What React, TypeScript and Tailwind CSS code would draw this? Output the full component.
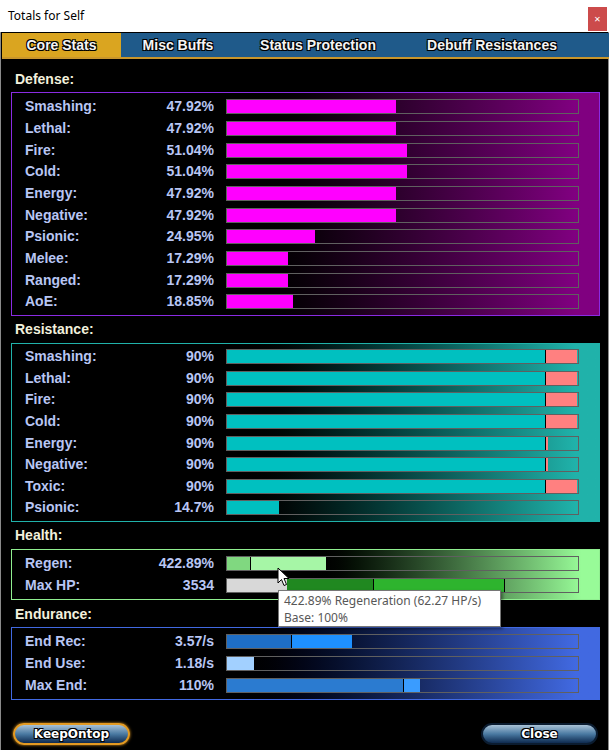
import React from "react";

type Seg = { w: number; color: string; divider?: boolean };
type Row = { label: string; value: string; segs: Seg[] };

const labelFont = { fontFamily: '"Liberation Sans", Arial, sans-serif' };

const outline =
  "[text-shadow:-1px_-1px_0_#000,1px_-1px_0_#000,-1px_1px_0_#000,1px_1px_0_#000]";

const mag = (pct: number): Seg[] => [{ w: Math.round(pct * 3.52), color: "#ff00ff" }];

const DEFENSE: Row[] = [
  { label: "Smashing:", value: "47.92%", segs: mag(47.92) },
  { label: "Lethal:", value: "47.92%", segs: mag(47.92) },
  { label: "Fire:", value: "51.04%", segs: mag(51.04) },
  { label: "Cold:", value: "51.04%", segs: mag(51.04) },
  { label: "Energy:", value: "47.92%", segs: mag(47.92) },
  { label: "Negative:", value: "47.92%", segs: mag(47.92) },
  { label: "Psionic:", value: "24.95%", segs: mag(24.95) },
  { label: "Melee:", value: "17.29%", segs: mag(17.29) },
  { label: "Ranged:", value: "17.29%", segs: mag(17.29) },
  { label: "AoE:", value: "18.85%", segs: mag(18.85) },
];

const capped: Seg[] = [
  { w: 318, color: "#00c0c0" },
  { w: 32, color: "#ff8080", divider: true },
];
const sliver: Seg[] = [
  { w: 318, color: "#00c0c0" },
  { w: 3, color: "#ff8080", divider: true },
];

const RESISTANCE: Row[] = [
  { label: "Smashing:", value: "90%", segs: capped },
  { label: "Lethal:", value: "90%", segs: capped },
  { label: "Fire:", value: "90%", segs: capped },
  { label: "Cold:", value: "90%", segs: capped },
  { label: "Energy:", value: "90%", segs: sliver },
  { label: "Negative:", value: "90%", segs: sliver },
  { label: "Toxic:", value: "90%", segs: capped },
  { label: "Psionic:", value: "14.7%", segs: [{ w: 52, color: "#00c0c0" }] },
];

const HEALTH: Row[] = [
  {
    label: "Regen:",
    value: "422.89%",
    segs: [
      { w: 23, color: "#80d880" },
      { w: 76, color: "#a6f6a6", divider: true },
    ],
  },
  {
    label: "Max HP:",
    value: "3534",
    segs: [
      { w: 60, color: "#d8d8d8" },
      { w: 86, color: "#208820" },
      { w: 131, color: "#2eb42e", divider: true },
      { w: 1, color: "#000" },
    ],
  },
];

const ENDURANCE: Row[] = [
  {
    label: "End Rec:",
    value: "3.57/s",
    segs: [
      { w: 64, color: "#1e6ec6" },
      { w: 61, color: "#1e90ff", divider: true },
    ],
  },
  { label: "End Use:", value: "1.18/s", segs: [{ w: 27, color: "#a2d0ff" }] },
  {
    label: "Max End:",
    value: "110%",
    segs: [
      { w: 176, color: "#2b7bd0" },
      { w: 17, color: "#3a9cff", divider: true },
    ],
  },
];

function StatRow({ row }: { row: Row }) {
  return (
    <div className="flex items-center h-[21.67px]">
      <div
        className="w-[189px] flex justify-between text-[14px] font-bold text-[#b8c6f4] [text-shadow:1px_1px_1px_#000]"
        style={labelFont}
      >
        <span>{row.label}</span>
        <span>{row.value}</span>
      </div>
      <div className="ml-[12px] w-[353px] h-[15px] border border-[#606060] flex overflow-hidden">
        {row.segs.map((s, i) => (
          <div
            key={i}
            className={s.divider ? "h-full border-l border-black shrink-0" : "h-full shrink-0"}
            style={{ width: s.w, backgroundColor: s.color }}
          />
        ))}
      </div>
    </div>
  );
}

function Section({
  title,
  rows,
  border,
  grad,
  pad,
}: {
  title: string;
  rows: Row[];
  border: string;
  grad: string;
  pad: string;
}) {
  return (
    <div>
      <div
        className="h-[27px] flex items-center pl-[14px] pt-[1px] text-[14px] font-bold text-[#f2f0dc] [text-shadow:1px_1px_1px_#000]"
        style={labelFont}
      >
        {title}
      </div>
      <div className={`ml-[10px] w-[589px] border pl-[13px] ${pad} ${border} ${grad}`}>
        {rows.map((r) => (
          <StatRow key={r.label} row={r} />
        ))}
      </div>
    </div>
  );
}

function GameButton({ label, glow }: { label: string; glow?: boolean }) {
  return (
    <div
      className={`w-[117px] h-[22px] rounded-full flex items-center justify-center bg-gradient-to-b from-[#a9c2d6] via-[#4a7aa2] to-[#0f2b50] border-2 ${
        glow ? "border-[#e39a22] shadow-[0_0_3px_#e39a22]" : "border-[#0b1c30]"
      }`}
    >
      <span
        className={`text-[12px] font-bold text-white ${outline}`}
        style={{ fontFamily: '"DejaVu Sans", sans-serif' }}
      >
        {label}
      </span>
    </div>
  );
}

export default function App() {
  return (
    <div className="w-[612px] h-[750px] bg-white overflow-hidden flex flex-col">
      <div className="h-[32px] flex items-center pl-[8px] shrink-0">
        <span
          className="text-[12px] text-black"
          style={{ fontFamily: '"Noto Sans", sans-serif' }}
        >
          Totals for Self
        </span>
        <div className="ml-auto mr-[5px] mt-[6px] w-[19px] h-[24px] bg-[#cc4b4b] flex items-center justify-center text-white text-[11px]">
          ×
        </div>
      </div>
      <div className="flex flex-1">
        <div className="w-[609px] bg-black border-l border-r border-[#8a8a8a] pt-[1px] relative">
          <div
            className="h-[26px] ml-[1px] mr-[-1px] bg-[#1f5a8a] border-b-2 border-[#c9962c] flex text-[14px] font-bold text-[#f4f4f4]"
            style={labelFont}
          >
            <div className={`w-[119px] bg-[#daa520] flex items-center justify-center ${outline}`}>
              Core Stats
            </div>
            <div className={`w-[114px] flex items-center justify-center ${outline}`}>Misc Buffs</div>
            <div className={`w-[166px] flex items-center justify-center ${outline}`}>
              Status Protection
            </div>
            <div className={`w-[182px] flex items-center justify-center ${outline}`}>
              Debuff Resistances
            </div>
          </div>

          <div className="mt-[6px]">
            <Section
              title="Defense:"
              rows={DEFENSE}
              border="border-[#8a2be2]"
              grad="bg-gradient-to-r from-black from-[36%] to-[#800080] to-[96%]"
              pad="pt-[3px] pb-[2px]"
            />
            <Section
              title="Resistance:"
              rows={RESISTANCE}
              border="border-[#20b2aa]"
              grad="bg-gradient-to-r from-black from-[36%] to-[#20b2aa] to-[96%]"
              pad="pt-[2px] pb-[2px]"
            />
            <Section
              title="Health:"
              rows={HEALTH}
              border="border-[#90ee90]"
              grad="bg-gradient-to-r from-black from-[50%] to-[#98fb98] to-[97%]"
              pad="pt-[3px] pb-[3px]"
            />
            <Section
              title="Endurance:"
              rows={ENDURANCE}
              border="border-[#4169e1]"
              grad="bg-gradient-to-r from-black from-[36%] to-[#4169e1] to-[96%]"
              pad="pt-[3px] pb-[3px]"
            />
          </div>

          <div className="flex justify-between mt-[23px] pl-[12px] pr-[10px]">
            <GameButton label="KeepOntop" glow />
            <GameButton label="Close" />
          </div>

          {/* tooltip + cursor overlay */}
          <div
            className="absolute left-[277px] top-[558px] w-[223px] h-[37px] bg-white border border-[#767676] shadow-[2px_2px_3px_rgba(0,0,0,0.4)] px-[5px] pt-[1px] text-[12px] leading-[17px] text-[#575757]"
            style={{ fontFamily: '"Noto Sans", sans-serif' }}
          >
            <div>422.89% Regeneration (62.27 HP/s)</div>
            <div>Base: 100%</div>
          </div>
          <svg
            className="absolute left-[276px] top-[535px]"
            width="13"
            height="20"
            viewBox="0 0 13 20"
          >
            <path
              d="M1 1 L1 16 L4.5 12.5 L7 18.5 L9.5 17.5 L7 11.5 L12 11.5 Z"
              fill="#fff"
              stroke="#000"
              strokeWidth="1"
              strokeLinejoin="round"
            />
          </svg>
        </div>
        <div className="flex-1 bg-white" />
      </div>
    </div>
  );
}
